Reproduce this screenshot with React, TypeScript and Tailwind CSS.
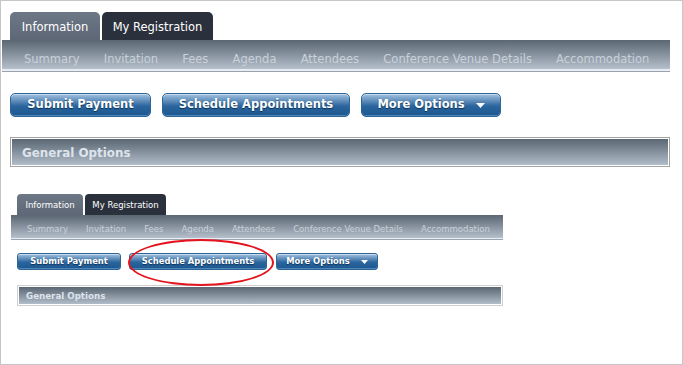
import React from "react";

const font = { fontFamily: '"DejaVu Sans", Verdana, sans-serif' };

function Section({ s }: { s: "big" | "small" }) {
  const big = s === "big";
  const tabs = big
    ? "h-[28px] pt-[4px] text-[11.5px] rounded-t-[5px]"
    : "h-[21px] pt-[1px] text-[8.5px] rounded-t-[4px]";
  const navItems = [
    "Summary",
    "Invitation",
    "Fees",
    "Agenda",
    "Attendees",
    "Conference Venue Details",
    "Accommodation",
  ];
  const btn = big
    ? "h-[24px] text-[11.5px] rounded-[5px]"
    : "h-[17px] text-[8.4px] rounded-[3px]";
  const btnBase =
    "flex items-center justify-center font-bold text-white border border-[#2f6596] bg-gradient-to-b from-[#a3c3e0] via-[#2a659d] via-55% to-[#1c578f] shadow-[inset_0_1px_0_#c9dcef,inset_0_-1px_0_#4f86b8] [text-shadow:0_1px_1px_#0b2f55]";
  return (
    <div className="flex flex-col">
      <div className={big ? "flex gap-[2px] ml-[9px]" : "flex gap-[2px] ml-[16px]"}>
        <div
          className={`${tabs} ${big ? "w-[90px]" : "w-[66px]"} flex items-center justify-center text-white bg-gradient-to-b from-[#6d7886] to-[#5d6775]`}
        >
          Information
        </div>
        <div
          className={`${tabs} ${big ? "w-[111px]" : "w-[81px]"} flex items-center justify-center text-white bg-[#2b313c]`}
        >
          My Registration
        </div>
      </div>
      <div
        className={
          big
            ? "ml-[1px] w-[668px] h-[31px] flex items-center gap-[24.2px] pl-[22px] pt-[11px] text-[11.5px] text-[#c9d1da] bg-gradient-to-b from-[#5c6774] to-[#b5c0cc] border-b-[2px] border-[#e8edf2] shadow-[0_1px_0_#9aa4ae]"
            : "ml-[10px] w-[492px] h-[24px] flex items-center gap-[18px] pl-[16px] pt-[5px] text-[8.5px] text-[#c9d1da] bg-gradient-to-b from-[#5c6774] to-[#b5c0cc] border-b-[1px] border-[#e8edf2] shadow-[0_1px_0_#9aa4ae]"
        }
      >
        {navItems.map((n) => (
          <span key={n} className="whitespace-nowrap">
            {n}
          </span>
        ))}
      </div>
      <div
        className={
          big
            ? "flex gap-[11px] ml-[9px] mt-[22px]"
            : "flex gap-[8px] ml-[16px] mt-[14px]"
        }
      >
        <div className={`${btnBase} ${btn} ${big ? "w-[141px]" : "w-[104px]"}`}>
          Submit Payment
        </div>
        <div className={`${btnBase} ${btn} ${big ? "w-[188px]" : "w-[138px]"}`}>
          Schedule Appointments
        </div>
        <div
          className={`${btnBase} ${btn} ${big ? "w-[140px] ml-0" : "w-[102px] ml-[1px]"} gap-[11px]`}
        >
          <span>More Options</span>
          <svg
            width={big ? 9 : 7}
            height={big ? 5 : 4}
            viewBox="0 0 9 5"
            className="mt-[1px]"
          >
            <path d="M0 0H9L4.5 5Z" fill="#ffffff" />
          </svg>
        </div>
      </div>
      <div
        className={
          big
            ? "ml-[9px] mt-[20px] w-[660px] h-[30px] border border-[#a3a3a3] p-[1px]"
            : "ml-[16px] mt-[15px] w-[486px] h-[21px] border border-[#cfcfcf] p-[1px]"
        }
      >
        <div
          className={
            big
              ? "h-full flex items-center pl-[10px] pt-[3px] font-bold text-[11.9px] text-[#dde4ec] bg-gradient-to-b from-[#5c6774] to-[#b2bdca]"
              : "h-full flex items-center pl-[7px] pt-[2px] font-bold text-[8.7px] text-[#dde4ec] bg-gradient-to-b from-[#5c6774] to-[#b2bdca]"
          }
        >
          General Options
        </div>
      </div>
    </div>
  );
}

export default function App() {
  return (
    <div
      className="relative w-[683px] h-[365px] bg-white border border-[#c6c6c6] overflow-hidden"
      style={font}
    >
      <div className="flex flex-col pt-[11px]">
        <Section s="big" />
        <div className="mt-[27px]">
          <Section s="small" />
        </div>
      </div>
      <div className="absolute left-[127px] top-[238px] w-[146px] h-[47px] rounded-[50%] border-[2px] border-[#e3141e]" />
    </div>
  );
}
